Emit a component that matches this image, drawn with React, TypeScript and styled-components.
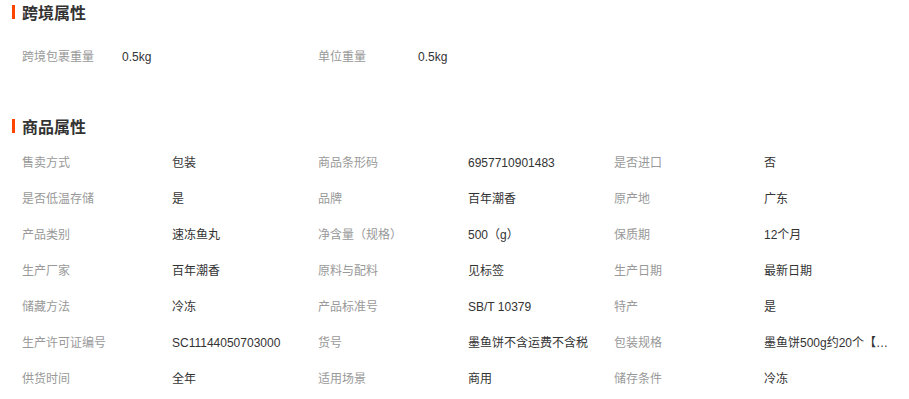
import * as React from 'react';
import styled, { createGlobalStyle } from 'styled-components';

const GlobalStyle = createGlobalStyle`
  body {
    margin: 0;
    background: #fff;
    font-family: "Liberation Sans", "Noto Sans CJK SC", sans-serif;
    font-size: 12px;
    color: #333;
  }
`;

const Page = styled.div`
  width: 909px;
  display: flex;
  flex-direction: column;
`;

const Section = styled.section<{ $gap: number; $bottom: number }>`
  display: flex;
  flex-direction: column;
  gap: ${(p) => p.$gap}px;
  padding-bottom: ${(p) => p.$bottom}px;
`;

const Title = styled.h3`
  margin: 0 0 0 12px;
  height: 24px;
  display: flex;
  align-items: center;
  gap: 7px;
  font-size: 16px;
  font-weight: bold;
  color: #333;
`;

const Bar = styled.span`
  width: 3px;
  height: 14px;
  background: #ff4400;
`;

const Grid = styled.div<{ $label: number }>`
  display: grid;
  grid-template-columns: repeat(3, ${(p) => p.$label}px ${(p) => 296 - p.$label}px);
  padding-left: 22px;
`;

const Label = styled.div`
  height: 36px;
  line-height: 36px;
  color: #999;
  white-space: nowrap;
`;

const Value = styled.div`
  height: 36px;
  line-height: 36px;
  color: #333;
  white-space: nowrap;
  overflow: hidden;
  text-overflow: ellipsis;
  padding-right: 20px;
`;

const crossBorder: [string, string][] = [
  ['跨境包裹重量', '0.5kg'],
  ['单位重量', '0.5kg'],
];

const goods: [string, string][] = [
  ['售卖方式', '包装'],
  ['商品条形码', '6957710901483'],
  ['是否进口', '否'],
  ['是否低温存储', '是'],
  ['品牌', '百年潮香'],
  ['原产地', '广东'],
  ['产品类别', '速冻鱼丸'],
  ['净含量（规格）', '500（g）'],
  ['保质期', '12个月'],
  ['生产厂家', '百年潮香'],
  ['原料与配料', '见标签'],
  ['生产日期', '最新日期'],
  ['储藏方法', '冷冻'],
  ['产品标准号', 'SB/T 10379'],
  ['特产', '是'],
  ['生产许可证编号', 'SC11144050703000'],
  ['货号', '墨鱼饼不含运费不含税'],
  ['包装规格', '墨鱼饼500g约20个【约25g/个】'],
  ['供货时间', '全年'],
  ['适用场景', '商用'],
  ['储存条件', '冷冻'],
];

function Attrs({ items, label }: { items: [string, string][]; label: number }) {
  return (
    <Grid $label={label}>
      {items.map(([k, v]) => (
        <React.Fragment key={k}>
          <Label>{k}</Label>
          <Value>{v}</Value>
        </React.Fragment>
      ))}
    </Grid>
  );
}

function App() {
  return (
    <Page>
      <GlobalStyle />
      <Section $gap={15} $bottom={39}>
        <Title>
          <Bar />
          跨境属性
        </Title>
        <Attrs items={crossBorder} label={100} />
      </Section>
      <Section $gap={7} $bottom={0}>
        <Title>
          <Bar />
          商品属性
        </Title>
        <Attrs items={goods} label={150} />
      </Section>
    </Page>
  );
}

export default App;
